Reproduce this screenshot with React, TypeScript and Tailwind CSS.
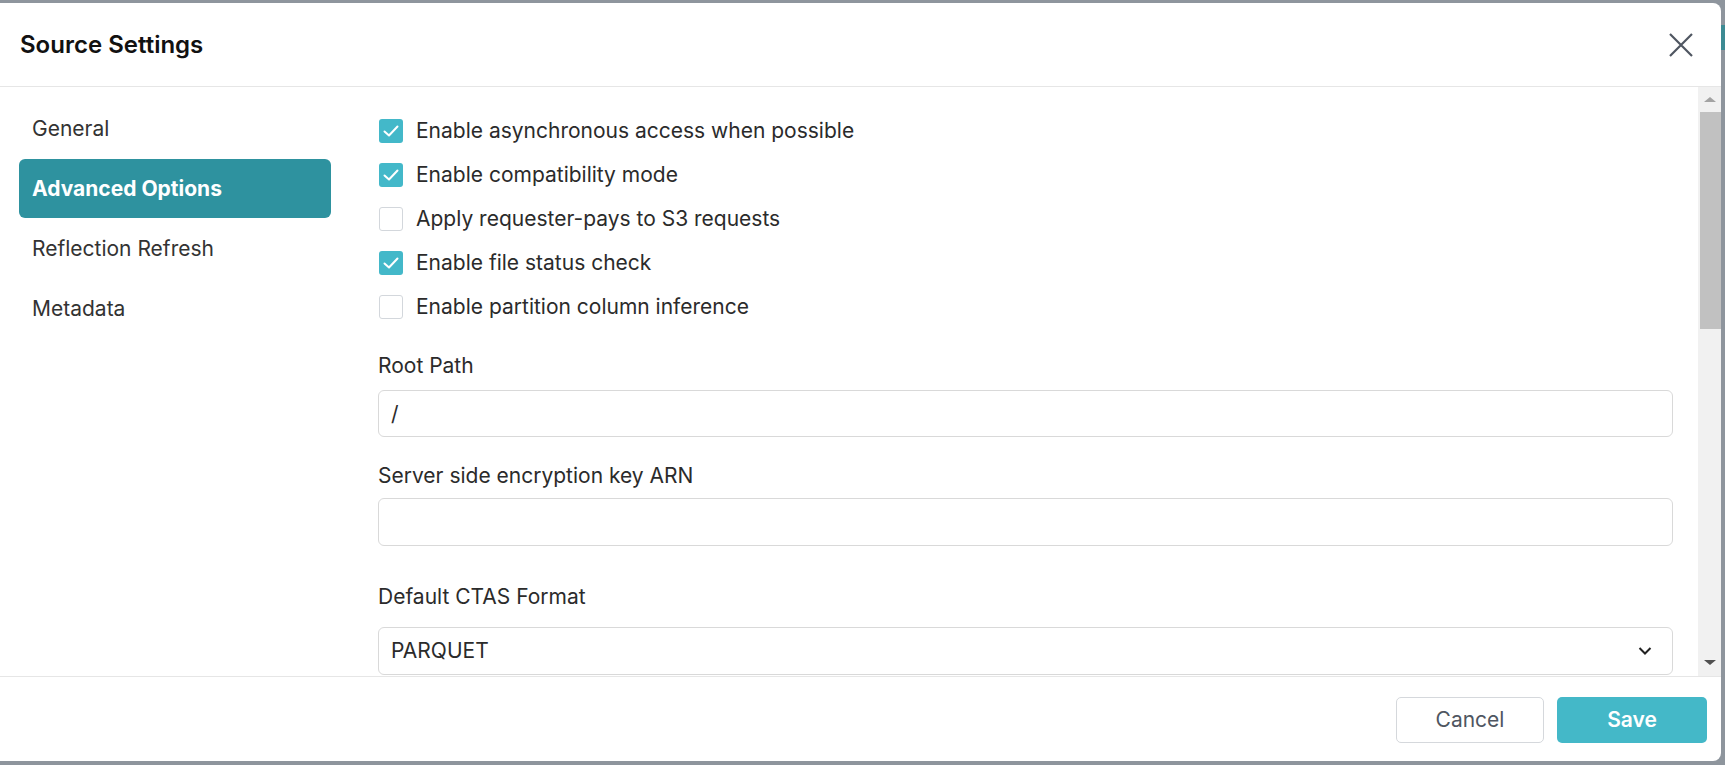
import React from 'react';

const options = [
    { label: 'Enable asynchronous access when possible', checked: true },
    { label: 'Enable compatibility mode', checked: true },
    { label: 'Apply requester-pays to S3 requests', checked: false },
    { label: 'Enable file status check', checked: true },
    { label: 'Enable partition column inference', checked: false },
];

const navItems = ['General', 'Advanced Options', 'Reflection Refresh', 'Metadata'];

const Checkbox = ({ checked }: { checked: boolean }) =>
    checked ? (
        <span className="w-[24px] h-[24px] rounded-[3px] bg-[#43b8c9] flex items-center justify-center">
            <svg width="24" height="24" viewBox="0 0 24 24" fill="none">
                <path d="M5.5 12.5 L10 16.5 L18.5 7.5" stroke="white" strokeWidth="2" strokeLinecap="round" strokeLinejoin="round" />
            </svg>
        </span>
    ) : (
        <span className="w-[24px] h-[24px] rounded-[3px] border-[1.5px] border-[#d3d7dc] bg-white" />
    );

const App = () => {
    return (
        <div className="w-[1725px] h-[765px] bg-[#8e959d] flex overflow-hidden font-['Inter',sans-serif]">
            <div className="mt-[3px] mb-[4px] w-[1721px] bg-white rounded-r-[8px] flex flex-col">
                {/* header */}
                <div className="h-[84px] border-b border-[#e6e6e6] flex items-center justify-between pl-[20px] pr-[28px]">
                    <h1 className="text-[24px] font-semibold text-[#111]">Source Settings</h1>
                    <svg width="24" height="24" viewBox="0 0 24 24" fill="none">
                        <path d="M1 1 L23 23 M23 1 L1 23" stroke="#4f5661" strokeWidth="2.2" />
                    </svg>
                </div>

                {/* body */}
                <div className="h-[589px] flex">
                    <div className="w-[350px] pt-[12px] px-[19px] flex flex-col gap-[1px]">
                        {navItems.map((item) => (
                            <div
                                key={item}
                                className={
                                    item === 'Advanced Options'
                                        ? 'h-[59px] rounded-[6px] bg-[#2e929f] text-white font-bold text-[21px] flex items-center pl-[13px]'
                                        : 'h-[59px] text-[#333] text-[21px] flex items-center pl-[13px]'
                                }
                            >
                                {item}
                            </div>
                        ))}
                    </div>

                    <div className="flex-1 flex overflow-hidden">
                        <div className="flex-1 pl-[28px] pr-[25px] pt-[22px] overflow-hidden">
                            {options.map((o) => (
                                <div key={o.label} className="h-[44px] flex items-center gap-[13px] pl-[1px]">
                                    <Checkbox checked={o.checked} />
                                    <span className="text-[21px] text-[#2b2b2b]">{o.label}</span>
                                </div>
                            ))}

                            <div className="mt-[25px] text-[21px] leading-[24px] text-[#2b2b2b]">Root Path</div>
                            <div className="mt-[12px] h-[47px] border border-[#d9d9d9] rounded-[6px] flex items-center px-[12px] text-[21px] text-[#2b2b2b]">
                                /
                            </div>

                            <div className="mt-[27px] text-[21px] leading-[24px] text-[#2b2b2b]">Server side encryption key ARN</div>
                            <div className="mt-[10px] h-[48px] border border-[#d9d9d9] rounded-[6px]" />

                            <div className="mt-[39px] text-[21px] leading-[24px] text-[#2b2b2b]">Default CTAS Format</div>
                            <div className="mt-[18px] h-[48px] border border-[#d9d9d9] rounded-[6px] flex items-center justify-between pl-[12px] pr-[20px] text-[21px] text-[#2b2b2b]">
                                <span>PARQUET</span>
                                <svg width="14" height="10" viewBox="0 0 14 10" fill="none">
                                    <path d="M1.5 2 L7 7.5 L12.5 2" stroke="#222" strokeWidth="2" />
                                </svg>
                            </div>
                        </div>

                        {/* scrollbar */}
                        <div className="w-[23px] bg-[#f1f1f1] flex flex-col">
                            <div className="h-[25px] flex items-center justify-center">
                                <span className="w-0 h-0 border-l-[6px] border-r-[6px] border-b-[5px] border-l-transparent border-r-transparent border-b-[#a3a3a3]" />
                            </div>
                            <div className="h-[217px] ml-[2px] bg-[#c1c1c1]" />
                            <div className="flex-1" />
                            <div className="h-[25px] flex items-center justify-center pb-[2px]">
                                <span className="w-0 h-0 border-l-[6px] border-r-[6px] border-t-[5px] border-l-transparent border-r-transparent border-t-[#505050]" />
                            </div>
                        </div>
                    </div>
                </div>

                {/* footer */}
                <div className="h-[85px] border-t border-[#e6e6e6] flex justify-end items-start pt-[20px] pr-[14px] gap-[13px]">
                    <button className="w-[148px] h-[46px] rounded-[5px] border border-[#d5d8dc] bg-white text-[21px] text-[#4f5661]">
                        Cancel
                    </button>
                    <button className="w-[150px] h-[46px] rounded-[5px] bg-[#44b8c8] text-[21px] font-semibold text-white">
                        Save
                    </button>
                </div>
            </div>
            <div className="w-[4px]">
                <div className="mt-[25px] h-[25px] bg-[#3d8a93]" />
            </div>
        </div>
    );
};

export default App;
